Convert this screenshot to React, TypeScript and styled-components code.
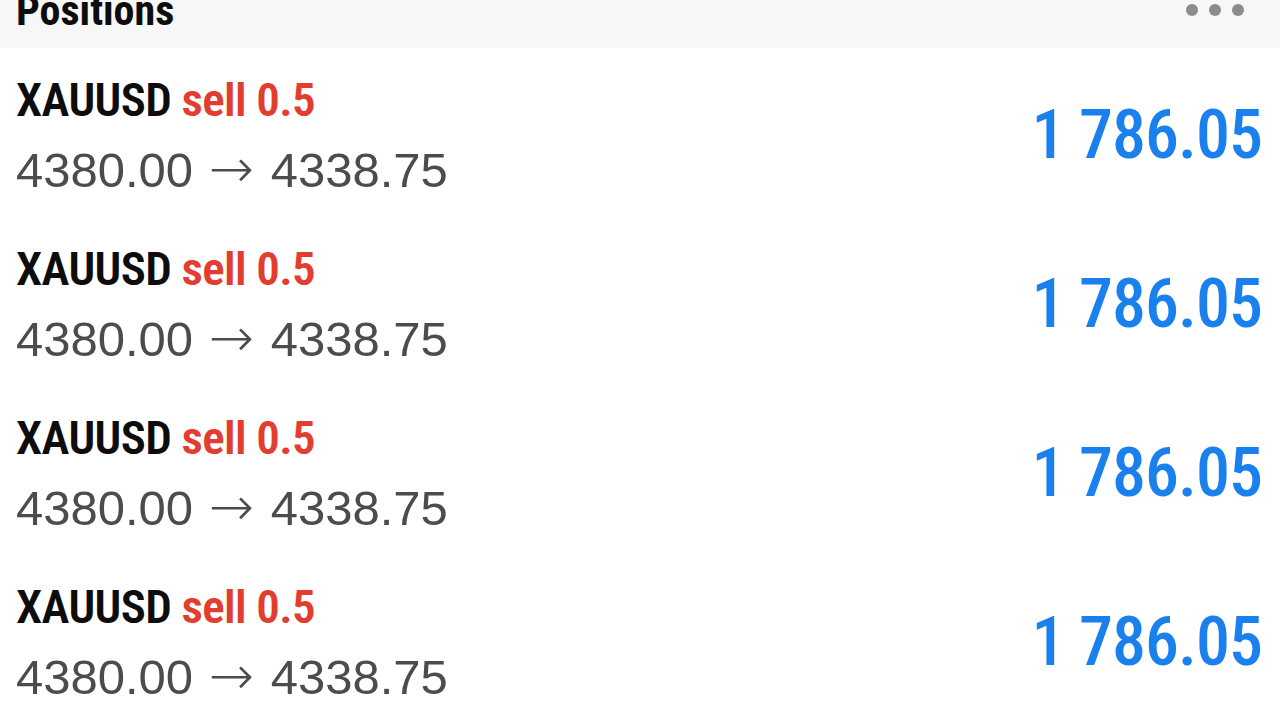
import styled, { createGlobalStyle } from "styled-components";

const positions = [
  { id: 1, symbol: "XAUUSD", side: "sell", volume: "0.5", open: "4380.00", current: "4338.75", profit: "1 786.05" },
  { id: 2, symbol: "XAUUSD", side: "sell", volume: "0.5", open: "4380.00", current: "4338.75", profit: "1 786.05" },
  { id: 3, symbol: "XAUUSD", side: "sell", volume: "0.5", open: "4380.00", current: "4338.75", profit: "1 786.05" },
  { id: 4, symbol: "XAUUSD", side: "sell", volume: "0.5", open: "4380.00", current: "4338.75", profit: "1 786.05" },
];

const GlobalStyle = createGlobalStyle`
  body {
    margin: 0;
    background: #fff;
    font-family: "Liberation Sans", Arial, sans-serif;
  }
`;

function App() {
  return (
    <Page>
      <GlobalStyle />
      <Header>
        <HeaderTitle>Positions</HeaderTitle>
        <MoreButton>
          <Dot />
          <Dot />
          <Dot />
        </MoreButton>
      </Header>
      <List>
        {positions.map(p => {
          return (
            <Row key={p.id}>
              <Info>
                <TitleLine>
                  {p.symbol} <Side>{p.side} {p.volume}</Side>
                </TitleLine>
                <Prices>
                  {p.open} <Arrow>→</Arrow> {p.current}
                </Prices>
              </Info>
              <Profit>{p.profit}</Profit>
            </Row>
          );
        })}
      </List>
    </Page>
  );
}

const Page = styled.div`
  width: 1280px;
  height: 720px;
  overflow: hidden;
  background: #fff;
`;

const Header = styled.div`
  height: 48px;
  background: #f7f7f7;
  display: flex;
  justify-content: space-between;
  align-items: flex-start;
  padding: 0 36px 0 16px;
  overflow: hidden;
`;

const HeaderTitle = styled.h2`
  margin: -10px 0 0 0;
  font-family: Roboto, sans-serif;
  font-stretch: 75%;
  font-weight: 700;
  font-size: 42px;
  line-height: 42px;
  color: #0d0d0d;
`;

const MoreButton = styled.div`
  display: flex;
  gap: 11px;
  margin-top: 4px;
`;

const Dot = styled.span`
  width: 12px;
  height: 12px;
  border-radius: 50%;
  background: #8c8c8c;
`;

const List = styled.div`
  display: flex;
  flex-direction: column;
`;

const Row = styled.div`
  height: 169px;
  display: flex;
  justify-content: space-between;
  align-items: center;
  padding: 4px 18px 0 16px;
  box-sizing: border-box;
`;

const Info = styled.div`
  display: flex;
  flex-direction: column;
`;

const TitleLine = styled.div`
  font-family: Roboto, sans-serif;
  font-stretch: 75%;
  font-weight: 600;
  font-size: 47px;
  line-height: 70px;
  letter-spacing: -0.6px;
  color: #0d0d0d;
  white-space: nowrap;
`;

const Side = styled.span`
  color: #e23d2f;
`;

const Prices = styled.div`
  font-family: "Liberation Sans", Arial, sans-serif;
  font-size: 49px;
  line-height: 70px;
  color: #4b4b50;
  white-space: nowrap;
`;

const Arrow = styled.span`
  font-family: Roboto, "DejaVu Sans", sans-serif;
  font-weight: 200;
  font-size: 54px;
  line-height: 1;
  margin: 0 3px 0 2px;
`;

const Profit = styled.div`
  font-family: Roboto, "Liberation Sans", sans-serif;
  font-stretch: 83%;
  font-weight: 500;
  font-size: 68px;
  letter-spacing: -1px;
  color: #1a80ee;
  white-space: nowrap;
`;

export default App;
